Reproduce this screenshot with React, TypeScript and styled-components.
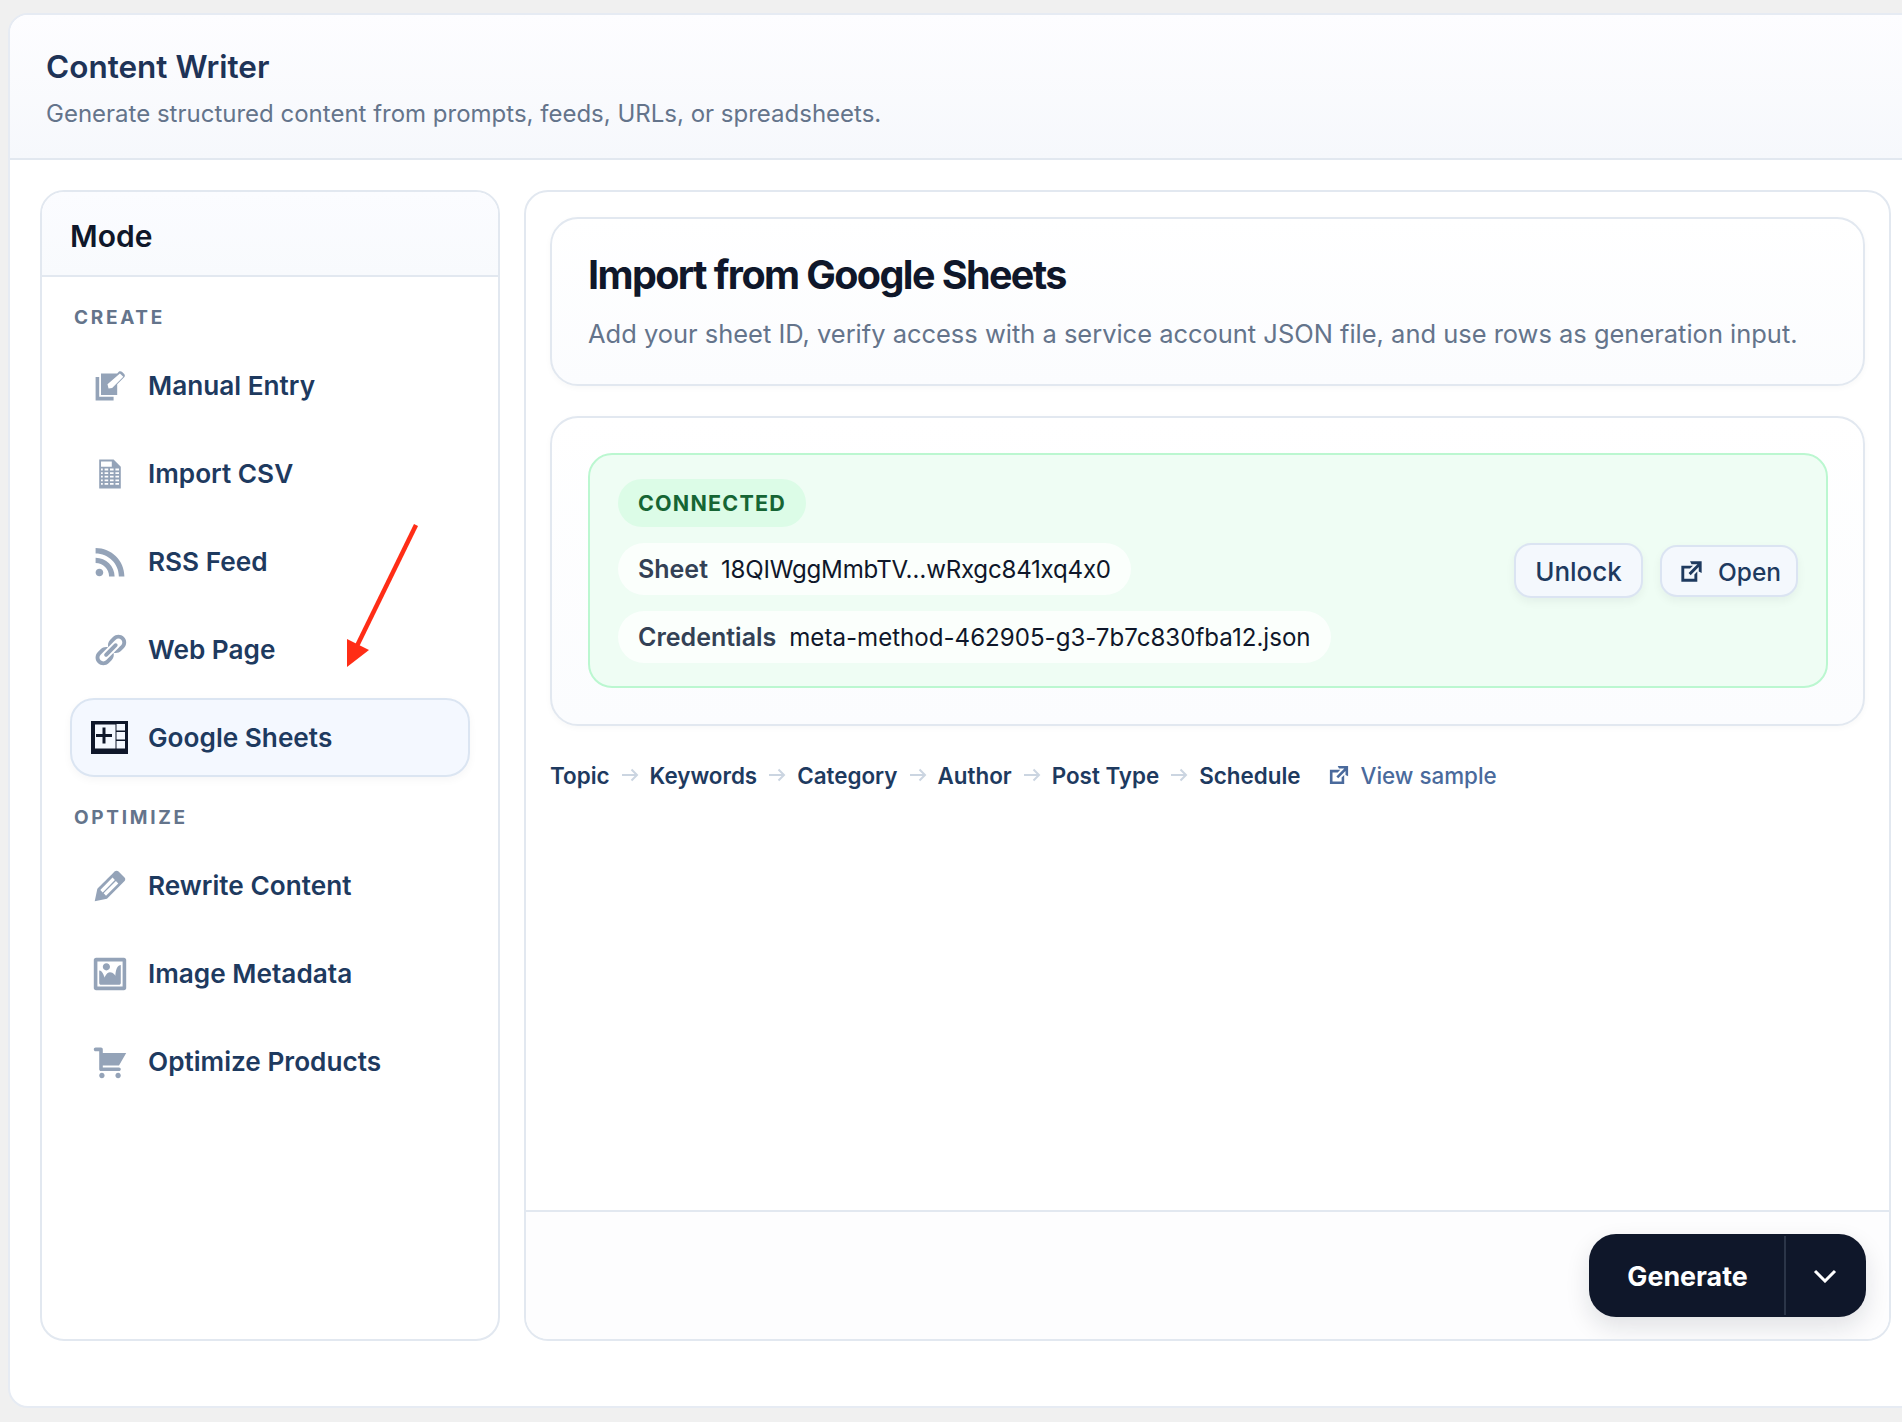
import React from "react";
import styled, { createGlobalStyle } from "styled-components";

const Global = createGlobalStyle`
  html, body { margin: 0; padding: 0; background: #f0f0f0; overflow-x: hidden; }
  body { font-family: Inter, "Noto Sans", "Liberation Sans", sans-serif; -webkit-font-smoothing: antialiased; font-feature-settings: "calt" 0; }
  * { box-sizing: border-box; }
`;

const Page = styled.div`
  position: relative;
  width: 1902px;
  height: 1422px;
  padding: 13px 0 0 8px;
  overflow: hidden;
`;
const Shell = styled.div`
  width: 1914px;
  height: 1395px;
  background: #fff;
  border: 2px solid #e6ebf3;
  border-radius: 20px;
  display: flex;
  flex-direction: column;
  overflow: hidden;
`;
const Header = styled.header`
  height: 145px;
  flex: none;
  padding: 31px 0 0 36px;
  background: linear-gradient(180deg, #fdfdff 0%, #f6f8fc 100%);
  border-bottom: 2px solid #e2e8f0;
`;
const Title = styled.h1`
  margin: 0;
  font-size: 31.5px;
  line-height: 42px;
  font-weight: 600;
  color: #1e3357;
`;
const Subtitle = styled.p`
  margin: 9px 0 0;
  font-size: 24px;
  line-height: 34px;
  color: #64748b;
`;
const Main = styled.main`
  flex: 1;
  display: flex;
  gap: 24px;
  padding: 30px 29px 65px 30px;
  min-height: 0;
`;
const Sidebar = styled.aside`
  width: 460px;
  flex: none;
  border: 2px solid #e2e8f0;
  border-radius: 24px;
  overflow: hidden;
`;
const SidebarHead = styled.div`
  height: 85px;
  padding: 4px 0 0 28px;
  display: flex;
  align-items: center;
  font-size: 30px;
  font-weight: 600;
  color: #0f172a;
  background: linear-gradient(180deg, #fbfcff 0%, #f8fafd 100%);
  border-bottom: 2px solid #e2e8f0;
`;
const NavBody = styled.nav`
  padding: 0 28px;
  display: flex;
  flex-direction: column;
`;
const GroupLabel = styled.div`
  margin: 30px 0 17px 4px;
  height: 22px;
  line-height: 22px;
  font-size: 19px;
  font-weight: 700;
  letter-spacing: 2.7px;
  color: #64748b;
`;
const NavList = styled.div`
  display: flex;
  flex-direction: column;
  gap: 9px;
`;
const NavItem = styled.div<{ $active?: boolean }>`
  height: 79px;
  display: flex;
  align-items: center;
  gap: 20px;
  padding-left: 19px;
  border-radius: 24px;
  border: 2px solid ${(p) => (p.$active ? "#dbe5f2" : "transparent")};
  background: ${(p) => (p.$active ? "#f4f8ff" : "transparent")};
  box-shadow: ${(p) => (p.$active ? "0 3px 8px rgba(15,23,42,.04)" : "none")};
  font-size: 26.2px;
  font-weight: 600;
  color: #1e3a5f;
`;
const IconSlot = styled.span<{ $active?: boolean }>`
  width: 37px;
  height: 37px;
  flex: none;
  display: flex;
  align-items: center;
  justify-content: center;
  color: ${(p) => (p.$active ? "#0f172a" : "#94a3b8")};
  svg { display: block; flex: none; fill: currentColor; }
`;
const Content = styled.section`
  flex: 1;
  min-width: 0;
  border: 2px solid #e2e8f0;
  border-radius: 24px;
  display: flex;
  flex-direction: column;
  overflow: hidden;
`;
const ContentBody = styled.div`
  flex: 1;
  padding: 25px 24px 0;
  display: flex;
  flex-direction: column;
`;
const Card = styled.div`
  border: 2px solid #e2e8f0;
  border-radius: 28px;
  background: linear-gradient(180deg, #fff 0%, #fbfcfe 100%);
  box-shadow: 0 2px 6px rgba(15, 23, 42, 0.03);
`;
const IntroCard = styled(Card)`
  height: 169px;
  padding: 31px 0 0 36px;
`;
const IntroTitle = styled.h2`
  margin: 0;
  font-size: 39.5px;
  line-height: 50px;
  font-weight: 700;
  letter-spacing: -1.6px;
  color: #0f172a;
`;
const IntroText = styled.p`
  margin: 17px 0 0;
  font-size: 25.46px;
  line-height: 34px;
  color: #64748b;
`;
const StatusCard = styled(Card)`
  margin-top: 30px;
  height: 310px;
  padding: 35px 35px 0 36px;
`;
const GreenBox = styled.div`
  height: 235px;
  background: #effdf4;
  border: 2px solid #bbf7d0;
  border-radius: 24px;
  padding: 0 28px 0 28px;
  display: flex;
  align-items: center;
  justify-content: space-between;
`;
const InfoColumn = styled.div`
  display: flex;
  flex-direction: column;
  align-items: flex-start;
  gap: 16px;
  align-self: flex-start;
  padding-top: 24px;
`;
const Badge = styled.span`
  height: 48px;
  padding: 0 20px;
  display: flex;
  align-items: center;
  border-radius: 24px;
  background: #dcfce7;
  color: #166534;
  font-size: 21.5px;
  font-weight: 700;
  letter-spacing: 1.2px;
`;
const InfoPill = styled.div`
  height: 52px;
  padding: 0 20px;
  display: flex;
  align-items: center;
  gap: 13px;
  border-radius: 26px;
  background: rgba(255, 255, 255, 0.75);
  font-size: 24.1px;
  color: #0f172a;
`;
const InfoKey = styled.strong`
  font-size: 25px;
  font-weight: 600;
  color: #334155;
`;
const SheetValue = styled.span`
  letter-spacing: -0.22px;
`;
const Actions = styled.div`
  display: flex;
  align-items: center;
  gap: 17px;
`;
const ActionButton = styled.button<{ $tall?: boolean }>`
  height: ${(p) => (p.$tall ? 55 : 52)}px;
  width: ${(p) => (p.$tall ? 129 : 138)}px;
  display: flex;
  align-items: center;
  justify-content: center;
  gap: 12px;
  padding: 2px 0 0;
  font: 500 ${(p) => (p.$tall ? 26 : 24.5)}px Inter, sans-serif;
  font-feature-settings: "calt" 0;
  color: #1e3a5f;
  background: #f4f8fd;
  border: 2px solid #dbe4f2;
  border-radius: 17px;
  box-shadow: 0 4px 10px rgba(15, 23, 42, 0.05);
  svg { fill: currentColor; display: block; }
`;
const FlowRow = styled.div`
  margin-top: 34px;
  height: 30px;
  display: flex;
  align-items: center;
  gap: 11px;
  font-size: 22.4px;
  font-weight: 600;
  color: #1e3a5f;
`;
const FlowArrow = styled.svg`
  flex: none;
  fill: none;
  stroke: #cbd5e1;
  stroke-width: 2;
`;
const SampleLink = styled.a`
  margin-left: 14px;
  display: flex;
  align-items: center;
  gap: 9px;
  font-weight: 500;
  color: #4a6a9c;
  svg { fill: currentColor; display: block; }
`;
const Footer = styled.footer`
  height: 129px;
  flex: none;
  display: flex;
  align-items: center;
  justify-content: flex-end;
  padding-right: 23px;
  background: #fdfdfe;
  border-top: 2px solid #e2e8f0;
`;
const SplitButton = styled.div`
  width: 277px;
  height: 83px;
  display: flex;
  align-items: stretch;
  background: #0f172a;
  border-radius: 27px;
  box-shadow: 0 10px 24px rgba(15, 23, 42, 0.12);
  color: #fff;
`;
const GenerateLabel = styled.span`
  width: 195px;
  padding: 1px 0 0 2px;
  display: flex;
  align-items: center;
  justify-content: center;
  font-size: 26.8px;
  font-weight: 700;
`;
const Chevron = styled.span`
  flex: 1;
  margin: 2px 0;
  padding-right: 2px;
  border-left: 2px solid #2b3548;
  display: flex;
  align-items: center;
  justify-content: center;
  svg { fill: none; stroke: #fff; stroke-width: 3; display: block; }
`;
const Annotation = styled.svg`
  position: absolute;
  left: 340px;
  top: 520px;
  pointer-events: none;
`;

const Dash = ({ d, size = 36 }: { d: string; size?: number }) => (
  <svg width={size} height={size} viewBox="0 0 20 20" aria-hidden="true">
    <path d={d} fillRule="evenodd" />
  </svg>
);

const paths = {
  manual:
    "M4 5H2v13h10v-2H4V5zm13.9-1.6l-1.3-1.3c-.4-.4-1.1-.5-1.6-.1l-1 1H5v12h9V9l4-4c.4-.5.3-1.2-.1-1.6zM9.2 11.4L8.6 9l6.9-6 1.9 1.8-6.2 6.3-2 .3z",
  csv:
    "M12 2l4 4v12H4V2h8zm-1 4V3H5v3h6zM6 8V7H5v1h1zm3 0V7H7v1h2zm3 0V7h-2v1h2zm3 0V7h-2v1h2zM6 10V9H5v1h1zm3 0V9H7v1h2zm3 0V9h-2v1h2zm3 0V9h-2v1h2zM6 12v-1H5v1h1zm3 0v-1H7v1h2zm3 0v-1h-2v1h2zm3 0v-1h-2v1h2zM6 14v-1H5v1h1zm3 0v-1H7v1h2zm3 0v-1h-2v1h2zm3 0v-1h-2v1h2zM6 16v-1H5v1h1zm3 0v-1H7v1h2zm3 0v-1h-2v1h2zm3 0v-1h-2v1h2z",
  rss:
    "M14.92 18H18C18 9.32 10.82 2.25 2 2.25v3.02c7.12 0 12.92 5.71 12.92 12.73zm-5.44 0h3.08C12.56 12.27 7.82 7.6 2 7.6v3.02c2 0 3.87.77 5.29 2.16C8.7 14.17 9.48 16.03 9.48 18zm-5.35-.02c1.17 0 2.13-.93 2.13-2.09 0-1.15-.96-2.09-2.13-2.09-1.18 0-2.13.94-2.13 2.09 0 1.16.95 2.09 2.13 2.09z",
  link:
    "M17.74 2.76c1.68 1.69 1.68 4.41 0 6.1l-1.53 1.52c-1.12 1.12-2.7 1.47-4.14 1.09l2.62-2.61.76-.77.76-.76c.84-.84.84-2.2 0-3.04-.84-.85-2.2-.85-3.04 0l-.77.76-3.38 3.38c-.37-1.44-.02-3.02 1.1-4.14l1.52-1.53c1.69-1.68 4.42-1.68 6.1 0zM8.59 13.43l5.34-5.34c.42-.42.42-1.1 0-1.52-.44-.43-1.13-.39-1.53 0l-5.33 5.34c-.42.42-.42 1.1 0 1.52.44.43 1.13.39 1.52 0zm-.76 2.29l4.14-4.15c.38 1.44.03 3.02-1.09 4.14l-1.52 1.53c-1.69 1.68-4.41 1.68-6.1 0-1.68-1.68-1.68-4.42 0-6.1l1.53-1.52c1.12-1.12 2.7-1.47 4.14-1.1l-4.14 4.15c-.85.84-.85 2.2 0 3.05.84.84 2.2.84 3.04 0z",
  rewrite:
    "M13.89 3.39l2.71 2.72c.46.46.42 1.24.03 1.64l-8.01 8.02-5.56 1.16 1.16-5.58s7.6-7.63 7.99-8.03c.39-.39 1.22-.39 1.68.07zm-2.73 2.79l-5.59 5.61 1.11 1.11 5.54-5.65zm-2.97 8.23l5.58-5.6-1.07-1.08-5.59 5.6z",
  image:
    "M2.25 1h15.5c.69 0 1.25.56 1.25 1.25v15.5c0 .69-.56 1.25-1.25 1.25H2.25C1.56 19 1 18.44 1 17.75V2.25C1 1.56 1.56 1 2.25 1zM17 17V3H3v14h14zM10 6c0-1.1-.9-2-2-2s-2 .9-2 2 .9 2 2 2 2-.9 2-2zm3 5s0-6 3-6v10c0 .55-.45 1-1 1H5c-.55 0-1-.45-1-1V8c2 0 3 4 3 4s1-3 3-3 3 2 3 2z",
  cart:
    "M6 13h9c.55 0 1 .45 1 1s-.45 1-1 1H5c-.55 0-1-.45-1-1V4H2c-.55 0-1-.45-1-1s.45-1 1-1h3c.55 0 1 .45 1 1v2h13l-4 7H6v1zm-.5 3c.83 0 1.5.67 1.5 1.5S6.33 19 5.5 19 4 18.33 4 17.5 4.67 16 5.5 16zm9 0c.83 0 1.5.67 1.5 1.5s-.67 1.5-1.5 1.5-1.5-.67-1.5-1.5.67-1.5 1.5-1.5z",
  external:
    "M9 3h8v8l-2-1V6.92l-5.6 5.59-1.41-1.41L14.08 5H10zm3 12v-3l2-2v7H3V6h8L9 8H5v7h7z",
};

const SheetsIcon = () => (
  <svg width={37} height={33} viewBox="0 0 37 33" aria-hidden="true">
    <path
      fillRule="evenodd"
      d="M0 0h37v33H0zM4 3.5v24h20.5v-24zM25.5 3v6.5H34V3zM25.5 11v7.5H34V11zM25.5 20v7.5H34V20z"
    />
    <path d="M11.5 6.5h3v6.5H21v3h-6.5v6.5h-3V16H5v-3h6.5z" />
  </svg>
);

const create = [
  { label: "Manual Entry", icon: paths.manual, size: 36 },
  { label: "Import CSV", icon: paths.csv, size: 36 },
  { label: "RSS Feed", icon: paths.rss, size: 36 },
  { label: "Web Page", icon: paths.link, size: 36 },
];
const optimize = [
  { label: "Rewrite Content", icon: paths.rewrite, size: 44 },
  { label: "Image Metadata", icon: paths.image, size: 36 },
  { label: "Optimize Products", icon: paths.cart, size: 36 },
];
const flow = ["Topic", "Keywords", "Category", "Author", "Post Type", "Schedule"];

export default function App() {
  return (
    <>
      <Global />
      <Page>
        <Shell>
          <Header>
            <Title>Content Writer</Title>
            <Subtitle>Generate structured content from prompts, feeds, URLs, or spreadsheets.</Subtitle>
          </Header>
          <Main>
            <Sidebar>
              <SidebarHead>Mode</SidebarHead>
              <NavBody>
                <GroupLabel>CREATE</GroupLabel>
                <NavList>
                  {create.map((it) => (
                    <NavItem key={it.label}>
                      <IconSlot><Dash d={it.icon} size={it.size} /></IconSlot>
                      {it.label}
                    </NavItem>
                  ))}
                  <NavItem $active>
                    <IconSlot $active><SheetsIcon /></IconSlot>
                    Google Sheets
                  </NavItem>
                </NavList>
                <GroupLabel>OPTIMIZE</GroupLabel>
                <NavList>
                  {optimize.map((it) => (
                    <NavItem key={it.label}>
                      <IconSlot><Dash d={it.icon} size={it.size} /></IconSlot>
                      {it.label}
                    </NavItem>
                  ))}
                </NavList>
              </NavBody>
            </Sidebar>
            <Content>
              <ContentBody>
                <IntroCard>
                  <IntroTitle>Import from Google Sheets</IntroTitle>
                  <IntroText>
                    Add your sheet ID, verify access with a service account JSON file, and use rows as generation input.
                  </IntroText>
                </IntroCard>
                <StatusCard>
                  <GreenBox>
                    <InfoColumn>
                      <Badge>CONNECTED</Badge>
                      <InfoPill>
                        <InfoKey>Sheet</InfoKey>
                        <SheetValue>18QIWggMmbTV…wRxgc841xq4x0</SheetValue>
                      </InfoPill>
                      <InfoPill>
                        <InfoKey>Credentials</InfoKey>
                        meta-method-462905-g3-7b7c830fba12.json
                      </InfoPill>
                    </InfoColumn>
                    <Actions>
                      <ActionButton $tall>Unlock</ActionButton>
                      <ActionButton><Dash d={paths.external} size={29} />Open</ActionButton>
                    </Actions>
                  </GreenBox>
                </StatusCard>
                <FlowRow>
                  {flow.map((name, i) => (
                    <React.Fragment key={name}>
                      {i > 0 && (
                        <FlowArrow width="18" height="14" viewBox="0 0 18 14" aria-hidden="true">
                          <path d="M1 7h15M10.5 1.5L16 7l-5.5 5.5" />
                        </FlowArrow>
                      )}
                      <span>{name}</span>
                    </React.Fragment>
                  ))}
                  <SampleLink>
                    <Dash d={paths.external} size={26} />
                    View sample
                  </SampleLink>
                </FlowRow>
              </ContentBody>
              <Footer>
                <SplitButton>
                  <GenerateLabel>Generate</GenerateLabel>
                  <Chevron>
                    <svg width="24" height="14" viewBox="0 0 24 14" aria-hidden="true">
                      <path d="M2 2l10 10L22 2" />
                    </svg>
                  </Chevron>
                </SplitButton>
              </Footer>
            </Content>
          </Main>
        </Shell>
        <Annotation width="90" height="155" viewBox="0 0 90 155" aria-hidden="true">
          <path d="M76 5L14 132" stroke="#ff2d16" strokeWidth="4.5" fill="none" />
          <path d="M7 147V119L29 130z" fill="#ff2d16" />
        </Annotation>
      </Page>
    </>
  );
}
